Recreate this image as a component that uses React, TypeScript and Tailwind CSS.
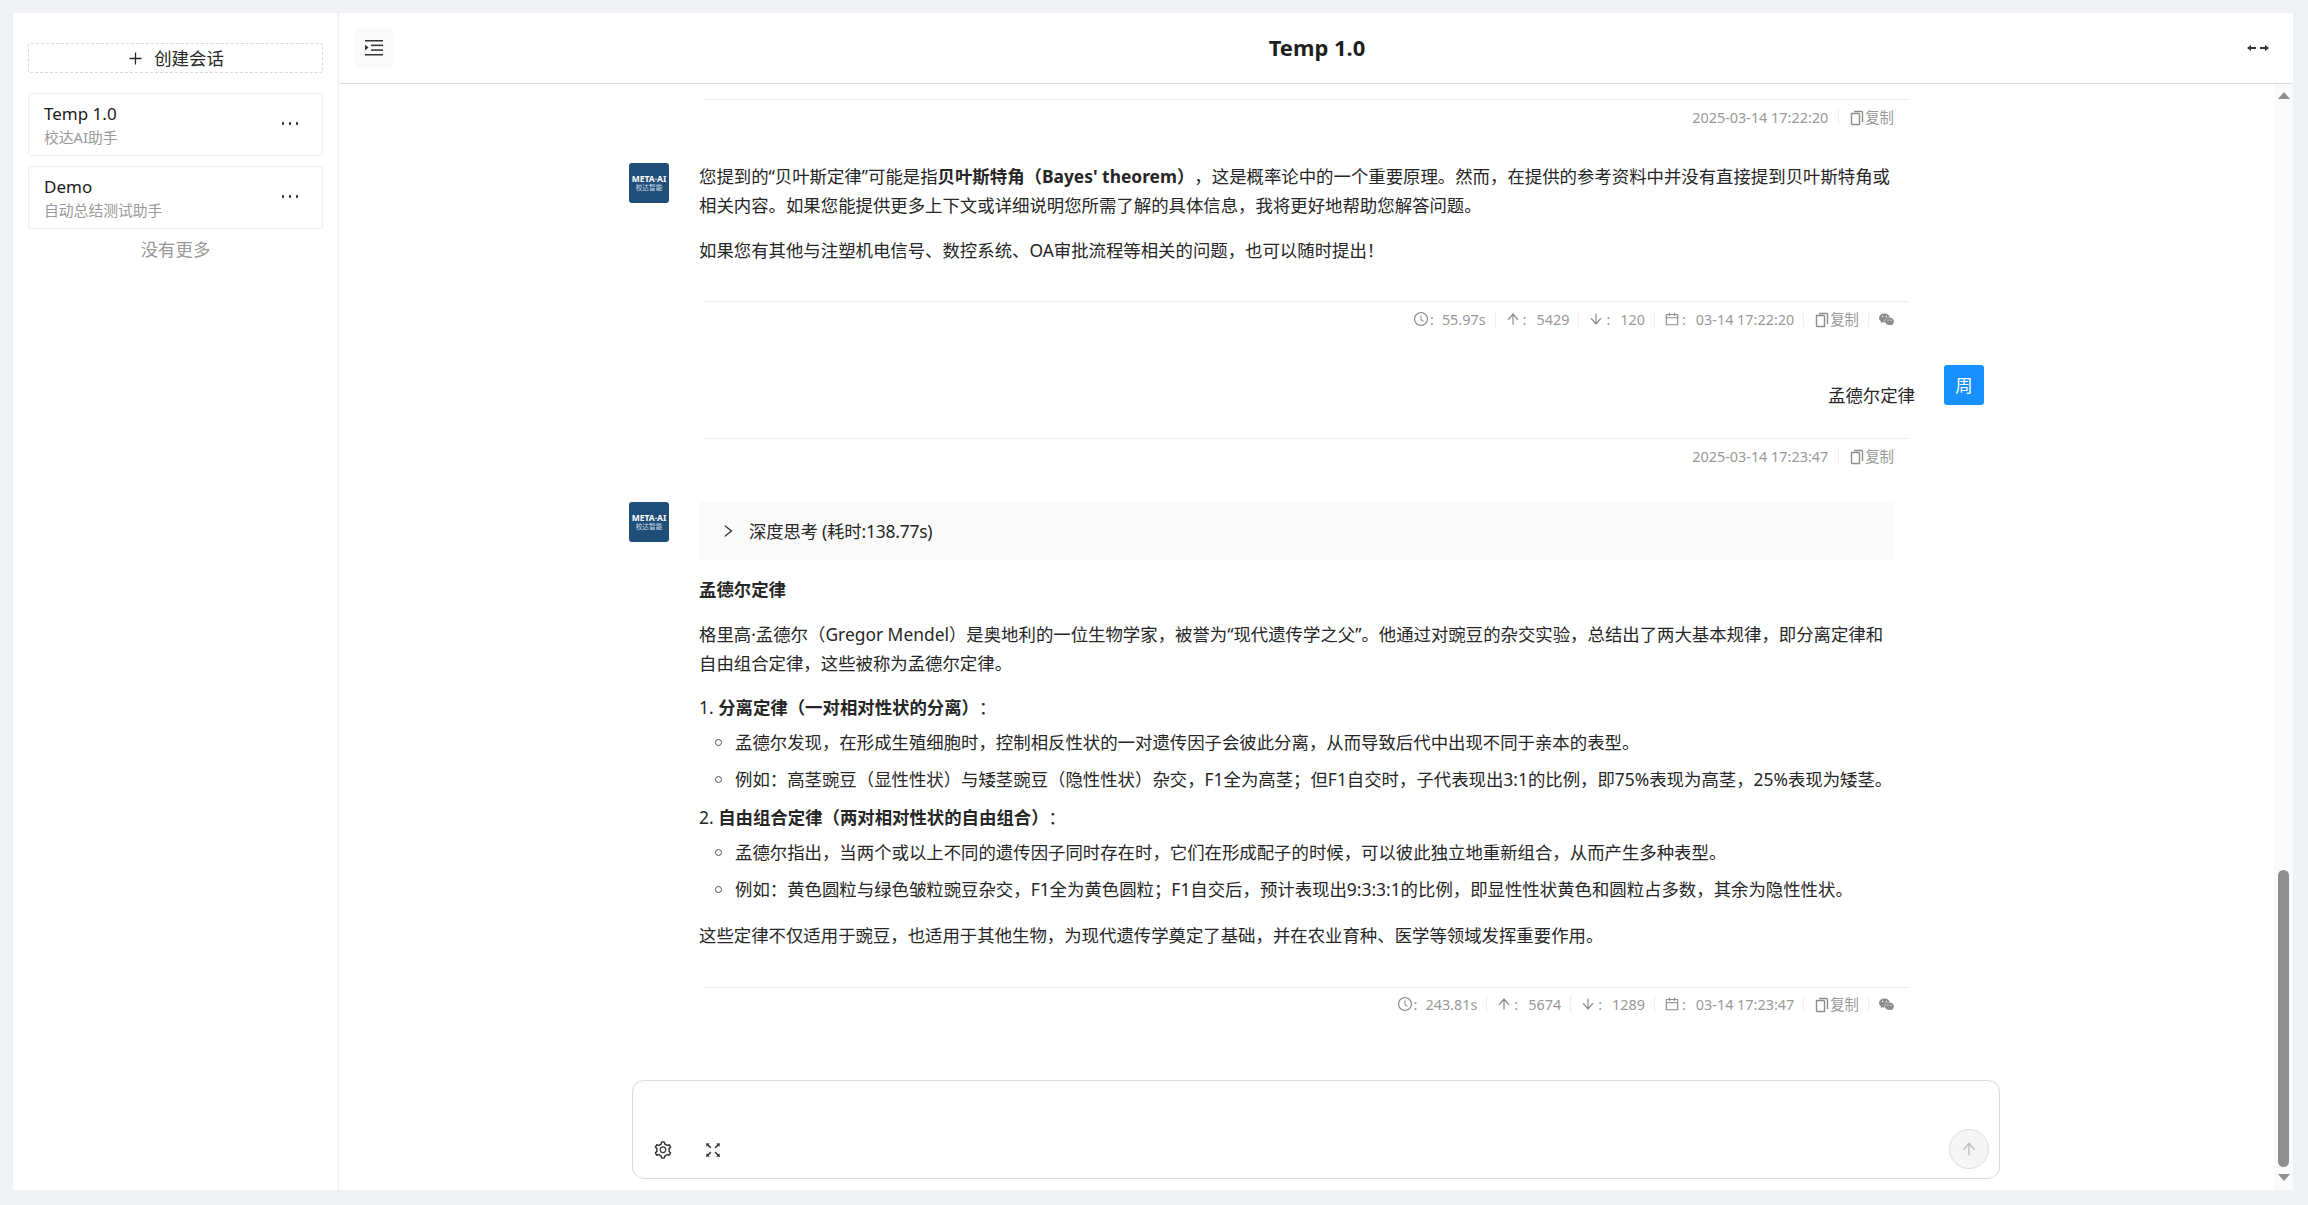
import React from "react";
import {
  AiOutlineClockCircle,
  AiOutlineArrowUp,
  AiOutlineArrowDown,
  AiOutlineCalendar,
  AiFillWechat,
  AiOutlineSetting,
  AiOutlineFullscreen,
  AiOutlinePlus,
  AiOutlineRight,
} from "react-icons/ai";

function CopyIcon() {
  return (
    <svg width="17" height="17" viewBox="0 0 17 17" fill="none" stroke="#8c8c8c" strokeWidth="1.4" className="shrink-0">
      <path d="M6 2.5h7.5a1 1 0 0 1 1 1v9.5" />
      <path d="M3.5 4.5h7a1 1 0 0 1 1 1v10h-7a1 1 0 0 1-1-1z" />
    </svg>
  );
}

function Logo() {
  return (
    <div className="w-10 h-10 shrink-0 rounded-[3px] bg-[#1f4e79] flex flex-col items-center justify-center text-white">
      <span className="text-[8.5px] leading-[9px] font-bold">META·AI</span>
      <span className="text-[6.7px] leading-[9px] text-[#d5dfea]">校达智能</span>
    </div>
  );
}

function Sep() {
  return <span className="w-px h-4 bg-[#eeeeee] mx-[9px]" />;
}

function Stats({ time, up, down, date }: { time: string; up: string; down: string; date: string }) {
  return (
    <div className="w-[1190px] ml-[75px] h-[34px] flex items-center justify-end text-[14.4px] text-[#999999]">
      <AiOutlineClockCircle className="text-[16px] text-[#8c8c8c]" />
      <span className="ml-[1px]">:</span>
      <span className="ml-[8px]">{time}</span>
      <Sep />
      <AiOutlineArrowUp className="text-[16px] text-[#8c8c8c]" />
      <span className="ml-[2px]">:</span>
      <span className="ml-[10px]">{up}</span>
      <Sep />
      <AiOutlineArrowDown className="text-[16px] text-[#8c8c8c]" />
      <span className="ml-[2px]">:</span>
      <span className="ml-[10px]">{down}</span>
      <Sep />
      <AiOutlineCalendar className="text-[16px] text-[#8c8c8c]" />
      <span className="ml-[2px]">:</span>
      <span className="ml-[10px]">{date}</span>
      <Sep />
      <CopyIcon />
      <span>复制</span>
      <Sep />
      <AiFillWechat className="text-[17px] text-[#8c8c8c] mr-[-1px]" />
    </div>
  );
}

function Stamp({ text }: { text: string }) {
  return (
    <div className="w-[1190px] ml-[75px] h-[34px] flex items-center justify-end text-[14.4px] text-[#999999]">
      <span>{text}</span>
      <span className="w-px h-4 bg-[#eeeeee] ml-[10px] mr-[9px]" />
      <CopyIcon />
      <span>复制</span>
    </div>
  );
}

function Divider() {
  return <div className="ml-[75px] w-[1205px] h-px bg-[#eeeeee]" />;
}

function Conv({ title, sub }: { title: string; sub: string }) {
  return (
    <div className="h-[63px] border border-[#eeeeee] rounded-[3px] pl-[15px] pr-[24px] flex items-center justify-between">
      <div className="flex flex-col">
        <span className="text-[17px] leading-[24px] text-[#1a1a1a]">{title}</span>
        <span className="text-[14.8px] leading-[22px] text-[#999999]">{sub}</span>
      </div>
      <div className="flex gap-[4.5px] items-center mt-[-2px]">
        <span className="w-[2.5px] h-[2.5px] rounded-full bg-[#222222]" />
        <span className="w-[2.5px] h-[2.5px] rounded-full bg-[#222222]" />
        <span className="w-[2.5px] h-[2.5px] rounded-full bg-[#222222]" />
      </div>
    </div>
  );
}

function Bullet({ children }: { children: React.ReactNode }) {
  return (
    <div className="flex items-center h-[29px] whitespace-nowrap">
      <span className="w-[7px] h-[7px] rounded-full border-[1.5px] border-[#555555] ml-[16px] mr-[13px] shrink-0" />
      <span>{children}</span>
    </div>
  );
}

export default function App() {
  return (
    <div className="h-[1205px] w-[2308px] overflow-hidden bg-[#f0f2f6] pt-[13px] pb-[15px] pl-[13px] pr-[15px] text-[#262626] [font-family:'Noto_Sans','Noto_Sans_CJK_SC',sans-serif] [text-spacing-trim:space-all]">
      <div className="h-full bg-white flex">
        {/* Sidebar */}
        <aside className="w-[326px] shrink-0 border-r border-[#eeeeee] px-[15px] pt-[30px]">
          <button className="w-[295px] h-[30px] border border-dashed border-[#d9d9d9] rounded-[3px] flex items-center justify-center text-[17.4px] text-[#262626]">
            <AiOutlinePlus className="text-[17px] mr-[10px]" />
            创建会话
          </button>
          <div className="w-[295px] mt-5 flex flex-col gap-[10px]">
            <Conv title="Temp 1.0" sub="校达AI助手" />
            <Conv title="Demo" sub="自动总结测试助手" />
          </div>
          <div className="w-[295px] mt-[7px] text-center text-[17.4px] leading-[26px] text-[#999999]">没有更多</div>
        </aside>

        {/* Main */}
        <main className="flex-1 min-w-0 flex flex-col">
          <header className="h-[71px] shrink-0 border-b border-[#dddddd] flex items-center justify-between pl-[15px] pr-[22px]">
            <button className="w-10 h-10 rounded-[4px] bg-[#fafafa] flex items-center justify-center">
              <svg width="18" height="16" viewBox="0 0 18 16" fill="#333333">
                <rect x="0" y="0" width="18" height="1.5" />
                <rect x="6" y="4.6" width="12" height="1.5" />
                <rect x="6" y="9.3" width="12" height="1.5" />
                <rect x="0" y="14" width="18" height="1.5" />
                <path d="M0 4.7v5.8l3.6-2.9z" />
              </svg>
            </button>
            <h1 className="text-[22px] font-bold text-[#1f1f1f] mr-[-9px] mt-[-1px]">Temp 1.0</h1>
            <div className="w-[40px] flex justify-end">
              <svg width="24" height="8" viewBox="0 0 24 8" fill="#333333">
                <path d="M0 4l4-3v2h5v2H4v2z" />
                <path d="M22 4l-4-3v2h-5v2h5v2z" />
              </svg>
            </div>
          </header>

          <div className="flex-1 min-h-0 flex">
            <div className="flex-1 min-w-0 flex flex-col">
              <div className="flex-1 min-h-0 overflow-hidden pl-[290px] pt-[15px] text-[17.4px] leading-[29px]">
                <div className="w-[1355px]">
                  <Divider />
                  <Stamp text="2025-03-14 17:22:20" />

                  <div className="flex gap-[30px] mt-[29px]">
                    <Logo />
                    <div className="whitespace-nowrap mt-[-1px]">
                      <p>
                        您提到的“贝叶斯定律”可能是指<b className="font-bold">贝叶斯特角（Bayes' theorem）</b>，这是概率论中的一个重要原理。然而，在提供的参考资料中并没有直接提到贝叶斯特角或
                        <br />
                        相关内容。如果您能提供更多上下文或详细说明您所需了解的具体信息，我将更好地帮助您解答问题。
                      </p>
                      <p className="mt-[16px]">如果您有其他与注塑机电信号、数控系统、OA审批流程等相关的问题，也可以随时提出！</p>
                    </div>
                  </div>

                  <div className="mt-[36px]">
                    <Divider />
                    <Stats time="55.97s" up="5429" down="120" date="03-14 17:22:20" />
                  </div>

                  <div className="flex justify-end mt-[29px]">
                    <span className="mt-[16px] mr-[29px]">孟德尔定律</span>
                    <div className="w-10 h-10 rounded-[3px] bg-[#1890ff] flex items-center justify-center text-white">周</div>
                  </div>

                  <div className="mt-[28px]">
                    <Divider />
                    <Stamp text="2025-03-14 17:23:47" />
                  </div>

                  <div className="flex gap-[30px] mt-[29px]">
                    <Logo />
                    <div className="w-[1195px] whitespace-nowrap">
                      <div className="h-[58px] bg-[#fafafa] rounded-[3px] flex items-center pl-[21px]">
                        <AiOutlineRight className="text-[16px] text-[#333333] mr-[13px]" />
                        <span className="tracking-[-0.2px]">深度思考 (耗时:138.77s)</span>
                      </div>
                      <p className="mt-[15px] font-bold">孟德尔定律</p>
                      <p className="mt-[16px]">
                        格里高·孟德尔（Gregor Mendel）是奥地利的一位生物学家，被誉为“现代遗传学之父”。他通过对豌豆的杂交实验，总结出了两大基本规律，即分离定律和
                        <br />
                        自由组合定律，这些被称为孟德尔定律。
                      </p>
                      <p className="mt-[15px]">
                        1. <b className="font-bold">分离定律（一对相对性状的分离）</b>：
                      </p>
                      <div className="mt-[6px] flex flex-col gap-[8px]">
                        <Bullet>孟德尔发现，在形成生殖细胞时，控制相反性状的一对遗传因子会彼此分离，从而导致后代中出现不同于亲本的表型。</Bullet>
                        <Bullet>例如：高茎豌豆（显性性状）与矮茎豌豆（隐性性状）杂交，F1全为高茎；但F1自交时，子代表现出3:1的比例，即75%表现为高茎，25%表现为矮茎。</Bullet>
                      </div>
                      <p className="mt-[9px]">
                        2. <b className="font-bold">自由组合定律（两对相对性状的自由组合）</b>：
                      </p>
                      <div className="mt-[6px] flex flex-col gap-[8px]">
                        <Bullet>孟德尔指出，当两个或以上不同的遗传因子同时存在时，它们在形成配子的时候，可以彼此独立地重新组合，从而产生多种表型。</Bullet>
                        <Bullet>例如：黄色圆粒与绿色皱粒豌豆杂交，F1全为黄色圆粒；F1自交后，预计表现出9:3:3:1的比例，即显性性状黄色和圆粒占多数，其余为隐性性状。</Bullet>
                      </div>
                      <p className="mt-[17px]">这些定律不仅适用于豌豆，也适用于其他生物，为现代遗传学奠定了基础，并在农业育种、医学等领域发挥重要作用。</p>
                    </div>
                  </div>

                  <div className="mt-[37px]">
                    <Divider />
                    <div className="mt-[-1px]">
                      <Stats time="243.81s" up="5674" down="1289" date="03-14 17:23:47" />
                    </div>
                  </div>
                </div>
              </div>

              {/* Input */}
              <div className="h-[110px] shrink-0 pl-[293px]">
                <div className="w-[1368px] h-[99px] border border-[#dcdcdc] rounded-[12px] flex items-end justify-between px-[10px] pb-[9px]">
                  <div className="flex items-center gap-[30px] pb-[9px] pl-[10px]">
                    <AiOutlineSetting className="text-[20px] text-[#333333]" />
                    <AiOutlineFullscreen className="text-[20px] text-[#333333]" />
                  </div>
                  <button className="w-10 h-10 rounded-full border border-[#dddddd] bg-[#f5f5f5] flex items-center justify-center">
                    <AiOutlineArrowUp className="text-[18px] text-[#bdbdbd]" />
                  </button>
                </div>
              </div>
            </div>

            {/* Scrollbar */}
            <div className="w-[19px] shrink-0 bg-[#fafafa] flex flex-col items-center">
              <span className="mt-[8px] w-0 h-0 border-x-[6px] border-x-transparent border-b-[7px] border-b-[#8f8f8f]" />
              <div className="mt-[771px] w-[11px] h-[297px] rounded-full bg-[#8f8f8f]" />
              <span className="mt-[7px] w-0 h-0 border-x-[6px] border-x-transparent border-t-[7px] border-t-[#8f8f8f]" />
            </div>
          </div>
        </main>
      </div>
    </div>
  );
}
